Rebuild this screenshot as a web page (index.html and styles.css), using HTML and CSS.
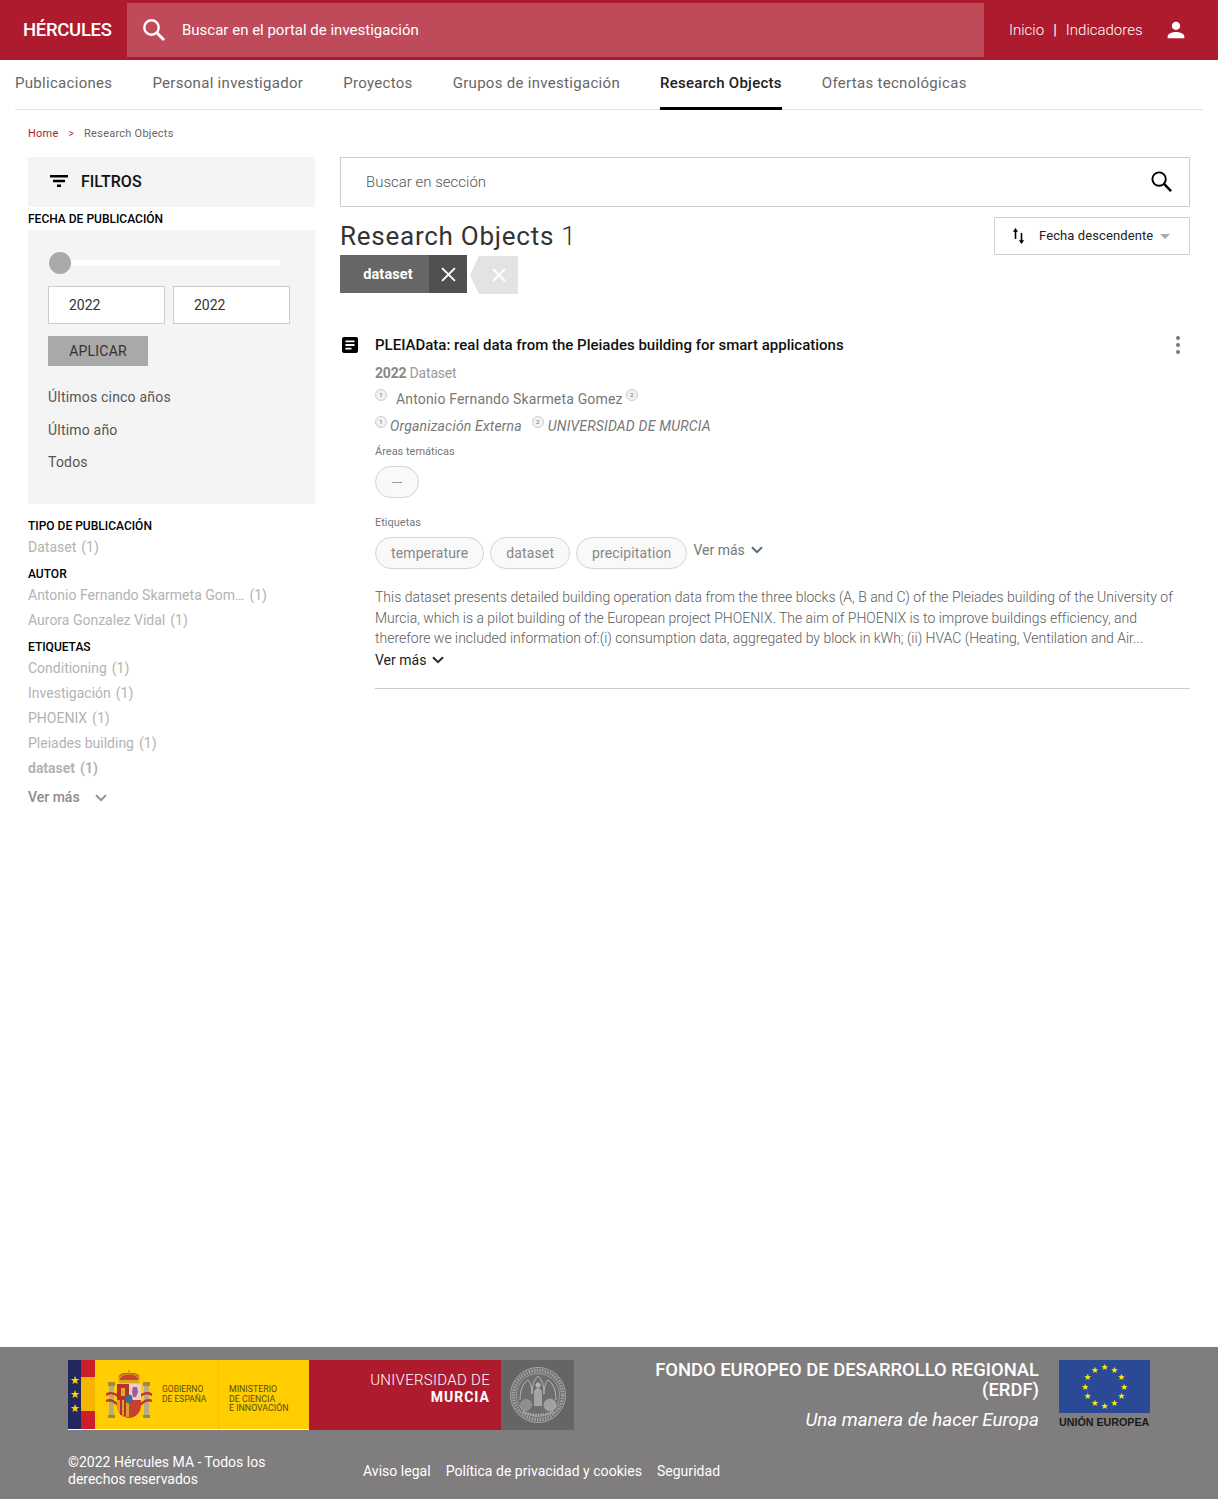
FILE: index.html
```html
<!DOCTYPE html>
<html lang="es">
<head>
  <meta charset="UTF-8">
  <title>Research Objects - Hércules</title>
  <meta name="viewport" content="width=device-width, initial-scale=1.0">
  <link rel="stylesheet" href="styles.css">
</head>
<body>
  <!-- cabecera -->
  <header class="topbar">
    <a class="brand">HÉRCULES</a>
    <div class="portal-search">
      <svg class="portal-search-icon" viewBox="0 0 24 24"><circle cx="9.5" cy="9.5" r="7.2" fill="none" stroke="#fff" stroke-width="2.4"/><path d="M14.8 14.8 22 22" stroke="#fff" stroke-width="3" fill="none"/></svg>
      <span>Buscar en el portal de investigación</span>
    </div>
    <nav class="toplinks">
      <a>Inicio</a><span class="sep">|</span><a>Indicadores</a>
    </nav>
    <svg class="user-icon" viewBox="0 0 24 24"><path fill="#fff" d="M12 12c2.8 0 5-2.2 5-5s-2.2-5-5-5-5 2.2-5 5 2.2 5 5 5zm0 2.5c-3.3 0-10 1.7-10 5V22h20v-2.5c0-3.3-6.7-5-10-5z"/></svg>
  </header>

  <nav class="tabs">
    <a class="tab">Publicaciones</a>
    <a class="tab">Personal investigador</a>
    <a class="tab">Proyectos</a>
    <a class="tab">Grupos de investigación</a>
    <a class="tab active">Research Objects</a>
    <a class="tab">Ofertas tecnológicas</a>
  </nav>

  <div class="breadcrumb"><a>Home</a><span class="bc-sep">&gt;</span><span>Research Objects</span></div>

  <main class="layout">
    <!-- filtros -->
    <aside class="sidebar">
      <div class="filters-head">
        <svg class="filters-icon" viewBox="0 0 18 12"><path d="M0 0h18v2.4H0zM3 4.8h12v2.4H3zM7 9.6h4V12H7z" fill="#000"/></svg>
        <span>FILTROS</span>
      </div>
      <h3 class="filter-title first">FECHA DE PUBLICACIÓN</h3>
      <div class="date-box">
        <div class="slider"><span class="slider-knob"></span></div>
        <div class="year-row">
          <div class="year-input">2022</div>
          <div class="year-input">2022</div>
        </div>
        <button class="apply-btn">APLICAR</button>
        <ul class="date-links">
          <li>Últimos cinco años</li>
          <li>Último año</li>
          <li>Todos</li>
        </ul>
      </div>

      <h3 class="filter-title type">TIPO DE PUBLICACIÓN</h3>
      <ul class="facet">
        <li>Dataset<span class="count">(1)</span></li>
      </ul>
      <h3 class="filter-title">AUTOR</h3>
      <ul class="facet">
        <li>Antonio Fernando Skarmeta Gom…<span class="count">(1)</span></li>
        <li>Aurora Gonzalez Vidal<span class="count">(1)</span></li>
      </ul>
      <h3 class="filter-title">ETIQUETAS</h3>
      <ul class="facet">
        <li>Conditioning<span class="count">(1)</span></li>
        <li>Investigación<span class="count">(1)</span></li>
        <li>PHOENIX<span class="count">(1)</span></li>
        <li>Pleiades building<span class="count">(1)</span></li>
        <li class="selected">dataset<span class="count">(1)</span></li>
      </ul>
      <a class="facet-more">Ver más
        <svg class="chev" viewBox="0 0 12 8"><path d="M1 1.2 6 6.2l5-5" fill="none" stroke="#8c8c8c" stroke-width="1.8"/></svg>
      </a>
    </aside>

    <!-- resultados -->
    <section class="content">
      <div class="section-search">
        <span>Buscar en sección</span>
        <svg class="section-search-icon" viewBox="0 0 24 24"><circle cx="9.5" cy="9.5" r="7" fill="none" stroke="#000" stroke-width="2"/><path d="M14.6 14.6 22 22" stroke="#000" stroke-width="2.6" fill="none"/></svg>
      </div>

      <div class="title-row">
        <div>
          <h1 class="page-title">Research Objects <span class="num">1</span></h1>
          <div class="active-filters">
            <div class="tag-active"><span class="tag-label">dataset</span><span class="tag-close"><svg viewBox="0 0 14 14"><path d="M1 1l12 12M13 1 1 13" stroke="#fff" stroke-width="1.8"/></svg></span></div>
            <div class="tag-clear"><svg viewBox="0 0 14 14"><path d="M1 1l12 12M13 1 1 13" stroke="#fff" stroke-width="2.2"/></svg></div>
          </div>
        </div>
        <div class="sort-box">
          <svg class="sort-icon" viewBox="0 0 12 16"><path d="M3 0 .4 3.8h1.8V11h1.6V3.8h1.8zM9 16l2.6-3.8H9.8V5H8.2v7.2H6.4z" fill="#000"/></svg>
          <span>Fecha descendente</span>
          <span class="caret"></span>
        </div>
      </div>

      <article class="result">
        <svg class="doc-icon" viewBox="0 0 16 16"><path fill-rule="evenodd" d="M2 0h12a2 2 0 0 1 2 2v12a2 2 0 0 1-2 2H2a2 2 0 0 1-2-2V2a2 2 0 0 1 2-2zm1.5 3.5v1.8h9V3.5zm0 3.6v1.8h9V7.1zm0 3.6v1.8h6v-1.8z" fill="#000"/></svg>
        <div class="result-body">
          <div class="result-head">
            <h2 class="result-title">PLEIAData: real data from the Pleiades building for smart applications</h2>
            <span class="dots"><i></i><i></i><i></i></span>
          </div>
          <p class="result-meta"><strong>2022</strong> Dataset</p>
          <p class="result-authors"><span class="badge">1</span><span class="author">Antonio Fernando Skarmeta Gomez</span><span class="badge tight">2</span></p>
          <p class="result-orgs"><span class="badge">1</span><em>Organización Externa</em><span class="badge gap">2</span><em>UNIVERSIDAD DE MURCIA</em></p>
          <div class="group-label">Áreas temáticas</div>
          <div class="pills"><span class="pill small">---</span></div>
          <div class="group-label second">Etiquetas</div>
          <div class="pills">
            <span class="pill">temperature</span>
            <span class="pill">dataset</span>
            <span class="pill">precipitation</span>
            <a class="more-inline">Ver más <svg class="chev" viewBox="0 0 12 8"><path d="M1 1.2 6 6.2l5-5" fill="none" stroke="#5a6c7c" stroke-width="2"/></svg></a>
          </div>
          <p class="abstract">This dataset presents detailed building operation data from the three blocks (A, B and C) of the Pleiades building of the University of Murcia, which is a pilot building of the European project PHOENIX. The aim of PHOENIX is to improve buildings efficiency, and therefore we included information of:(i) consumption data, aggregated by block in kWh; (ii) HVAC (Heating, Ventilation and Air...</p>
          <a class="more-abstract">Ver más <svg class="chev" viewBox="0 0 12 8"><path d="M1 1.2 6 6.2l5-5" fill="none" stroke="#1f2d3a" stroke-width="2"/></svg></a>
        </div>
      </article>
    </section>
  </main>

  <!-- pie -->
  <footer class="footer">
    <div class="footer-top">
      <div class="logos">
        <div class="logo-flag">
          <div class="flag-eu"><span>★</span><span>★</span><span>★</span></div>
          <div class="flag-es"></div>
        </div>
        <div class="logo-gov">
          <svg class="coat" viewBox="0 0 46 50">
            <!-- columnas -->
            <rect x="3" y="15" width="5" height="31" fill="#b5ad86"/>
            <rect x="38" y="15" width="5" height="31" fill="#b5ad86"/>
            <rect x="2" y="12" width="7" height="4" fill="#a8892f"/>
            <rect x="37" y="12" width="7" height="4" fill="#a8892f"/>
            <rect x="2" y="45" width="7" height="3" fill="#8d8a55"/>
            <rect x="37" y="45" width="7" height="3" fill="#8d8a55"/>
            <path d="M0 25c4-3 9-2 13 2M0 31c4-2 8 0 12 4M46 25c-4-3-9-2-13 2M46 31c-4-2-8 0-12 4" stroke="#c2342c" stroke-width="2.4" fill="none"/>
            <!-- corona -->
            <path d="M13 10C11 3 18 3 23 3s12 0 10 7z" fill="#c8442d"/>
            <path d="M13 10c0-4 5-6 10-6s10 2 10 6" fill="none" stroke="#d9a520" stroke-width="1.2"/>
            <rect x="22.3" y="0" width="1.4" height="5" fill="#b8912a"/>
            <rect x="13" y="10" width="20" height="3" fill="#d9a520"/>
            <!-- escudo -->
            <path d="M11 14h24v21c0 8-6 13-12 13s-12-5-12-13z" fill="#c9402e"/>
            <rect x="11" y="14" width="12" height="16" fill="#b8322a"/>
            <rect x="15" y="18" width="4" height="8" fill="#e0a92c"/>
            <rect x="23" y="14" width="12" height="16" fill="#ecd0c4"/>
            <path d="M27 17h4l1 5-2 5h-3l-1-5z" fill="#a05a9c"/>
            <path d="M11 30h12v17c-7 0-12-5-12-12z" fill="#dba02a"/>
            <rect x="14" y="30" width="2" height="15" fill="#b8322a"/>
            <rect x="18" y="30" width="2" height="16" fill="#b8322a"/>
            <ellipse cx="23" cy="29" rx="3.5" ry="4.5" fill="#3f6a8f"/>
          </svg>
          <div class="gov-text">GOBIERNO<br>DE ESPAÑA</div>
        </div>
        <div class="logo-min">MINISTERIO<br>DE CIENCIA<br>E INNOVACIÓN</div>
        <div class="logo-um">
          <div class="um-text">UNIVERSIDAD DE<br><b>MURCIA</b></div>
        </div>
        <div class="logo-seal">
          <svg viewBox="0 0 58 58">
            <circle cx="29" cy="29" r="27.5" fill="#6f6e6e" stroke="#a9a8a8" stroke-width="1"/>
            <circle cx="29" cy="29" r="24.5" fill="none" stroke="#a3a2a2" stroke-width="3.5" stroke-dasharray="1.5 1.2"/>
            <circle cx="29" cy="29" r="21.5" fill="none" stroke="#a9a8a8" stroke-width="0.8"/>
            <path d="M11 34c0-10 3-17 8-20 3 3 4 8 4 14M23 28c0-9 2-14 6-18 4 4 6 9 6 18M35 28c0-6 1-11 4-14 5 3 8 10 8 20" fill="none" stroke="#b5b4b4" stroke-width="1"/>
            <path d="M25 40V25l4-4 4 4v15z" fill="#a5a4a4"/>
            <circle cx="29" cy="19" r="2.5" fill="#b5b4b4"/>
            <circle cx="41" cy="39" r="6" fill="#a2a1a1" stroke="#c0bfbf" stroke-width="0.8" stroke-dasharray="1 1"/>
            <circle cx="17" cy="39" r="5.5" fill="#8f8e8e" stroke="#b5b4b4" stroke-width="0.8" stroke-dasharray="1 1"/>
            <path d="M14 46c9 4 21 4 30 0" fill="none" stroke="#b0afaf" stroke-width="2.5" stroke-dasharray="1.5 1"/>
          </svg>
        </div>
      </div>
      <div class="erdf">
        <div class="erdf-text">
          <div class="erdf-title">FONDO EUROPEO DE DESARROLLO REGIONAL<br>(ERDF)</div>
          <div class="erdf-motto">Una manera de hacer Europa</div>
        </div>
        <div class="eu-logo">
          <svg class="eu-flag" viewBox="0 0 91 53">
            <rect width="91" height="53" fill="#2a4a96"/>
            <g fill="#ffed00" font-size="8.5" text-anchor="middle" font-family="DejaVu Sans, sans-serif">
              <text x="45.5" y="10">★</text><text x="55.2" y="12.6">★</text><text x="62.4" y="19.8">★</text><text x="65" y="29.5">★</text><text x="62.4" y="39.2">★</text><text x="55.2" y="46.4">★</text><text x="45.5" y="49">★</text><text x="35.8" y="46.4">★</text><text x="28.6" y="39.2">★</text><text x="26" y="29.5">★</text><text x="28.6" y="19.8">★</text><text x="35.8" y="12.6">★</text>
            </g>
          </svg>
          <div class="eu-name">UNIÓN EUROPEA</div>
        </div>
      </div>
    </div>
    <div class="footer-bottom">
      <div class="copyright">©2022 Hércules MA - Todos los derechos reservados</div>
      <nav class="legal">
        <a>Aviso legal</a>
        <a>Política de privacidad y cookies</a>
        <a>Seguridad</a>
      </nav>
    </div>
  </footer>
</body>
</html>
```

FILE: styles.css
```css
* { box-sizing: border-box; margin: 0; padding: 0; }
body {
  font-family: Roboto, 'Liberation Sans', sans-serif;
  min-height: 100vh;
  display: flex;
  flex-direction: column;
  background: #fff;
  color: #333;
}
ul { list-style: none; }

/* cabecera */
.topbar {
  height: 60px;
  background: #ae1b2e;
  padding: 3px 0;
  display: flex;
  align-items: center;
  color: #fff;
}
.brand {
  width: 127px;
  padding: 0 0 1px 23px;
  font-size: 18.5px;
  font-weight: 500;
  letter-spacing: -0.3px;
}
.portal-search {
  width: 857px;
  height: 54px;
  background: #bf4a5a;
  display: flex;
  align-items: center;
  padding-left: 15px;
  font-size: 15px;
}
.portal-search-icon { width: 24px; height: 24px; margin-right: 16px; }
.toplinks {
  margin-left: 25px;
  font-size: 15px;
  font-weight: 300;
  display: flex;
  align-items: center;
}
.toplinks .sep { margin: 0 9px; font-weight: 400; }
.user-icon { width: 20px; height: 20px; margin-left: 23px; }

.tabs {
  height: 50px;
  margin: 0 15px;
  border-bottom: 1px solid #e0e0e0;
  display: flex;
  gap: 40px;
}
.tab {
  font-size: 15px;
  line-height: 46px;
  letter-spacing: 0.3px;
  color: #666;
  height: 50px;
}
.tab.active {
  color: #222;
  font-weight: 500;
  letter-spacing: 0.27px;
  border-bottom: 3px solid #000;
}

.breadcrumb {
  margin: 17px 28px 0;
  height: 14px;
  font-size: 11px;
  line-height: 14px;
  letter-spacing: 0.25px;
  color: #666;
  display: flex;
}
.breadcrumb a { color: #ae1b2e; }
.bc-sep { margin: 0 10px; color: #ae1b2e; font-size: 10px; }

.layout {
  display: flex;
  gap: 25px;
  padding: 16px 28px 0;
}

/* filtros */
.sidebar { width: 287px; flex-shrink: 0; }
.filters-head {
  height: 50px;
  background: #f4f4f4;
  display: flex;
  align-items: center;
  padding: 0 0 2px 22px;
  font-size: 16px;
  font-weight: 500;
  color: #111;
}
.filters-icon { width: 18px; height: 12px; margin-right: 13px; }
.filter-title {
  font-size: 12px;
  line-height: 16px;
  font-weight: 500;
  color: #000;
  margin-top: 6px;
}
.filter-title.first { margin-top: 4px; }
.filter-title.type { margin-top: 14px; }
.date-box {
  margin-top: 3px;
  height: 274px;
  background: #f4f4f4;
  padding: 30px 20px 0;
}
.slider {
  position: relative;
  height: 6px;
  width: 233px;
  background: #fff;
  border-radius: 3px;
}
.slider-knob {
  position: absolute;
  left: 1px;
  top: -8px;
  width: 22px;
  height: 22px;
  border-radius: 50%;
  background: #a9a9a9;
}
.year-row { display: flex; gap: 8px; margin-top: 20px; }
.year-input {
  width: 117px;
  height: 38px;
  background: #fff;
  border: 1px solid #ccc;
  padding-left: 20px;
  font-size: 14px;
  line-height: 36px;
  color: #333;
}
.apply-btn {
  display: block;
  width: 100px;
  height: 30px;
  margin-top: 12px;
  border: none;
  background: #a9a9a9;
  font-family: inherit;
  font-size: 14px;
  letter-spacing: 0.2px;
  color: #333;
}
.date-links { margin-top: 15px; font-size: 14px; letter-spacing: 0.2px; color: #555; }
.date-links li { line-height: 32.5px; }
.facet { font-size: 14px; color: #b3b3b3; margin-top: 1px; }
.facet li { line-height: 25px; }
.facet li.selected { font-weight: 700; }
.count { margin-left: 5px; }
.facet-more {
  display: flex;
  align-items: center;
  margin-top: 4px;
  font-size: 14px;
  line-height: 25px;
  font-weight: 500;
  color: #8c8c8c;
}
.facet-more .chev { margin-left: 15px; }
.chev { width: 12px; height: 8px; }

/* resultados */
.content { flex: 1; }
.section-search {
  height: 50px;
  border: 1px solid #ccc;
  display: flex;
  align-items: center;
  justify-content: space-between;
  padding: 0 16px 0 25px;
  font-size: 15px;
  font-weight: 300;
  color: #555;
}
.section-search-icon { width: 23px; height: 23px; margin-top: -2px; }
.title-row {
  display: flex;
  justify-content: space-between;
  align-items: flex-start;
  margin-top: 10px;
}
.page-title {
  font-size: 26px;
  line-height: 38px;
  font-weight: 400;
  letter-spacing: 0.75px;
  color: #333;
}
.page-title .num { font-weight: 300; }
.active-filters { display: flex; margin-top: 0; }
.tag-active { display: flex; height: 38px; background: #666; color: #fff; }
.tag-label {
  width: 89px;
  text-align: center;
  font-size: 14.5px;
  letter-spacing: 0.1px;
  font-weight: 700;
  line-height: 39px;
  padding-left: 7px;
}
.tag-close {
  width: 38px;
  background: #505050;
  display: flex;
  align-items: center;
  justify-content: center;
}
.tag-close svg { width: 15px; height: 15px; }
.tag-clear {
  width: 48px;
  height: 38px;
  margin: 1px 0 0 3px;
  background: #e3e3e3;
  clip-path: polygon(0 50%, 9px 0, 100% 0, 100% 100%, 9px 100%);
  display: flex;
  align-items: center;
  justify-content: center;
  padding-left: 10px;
}
.tag-clear svg { width: 14px; height: 14px; }
.sort-box {
  width: 196px;
  height: 38px;
  border: 1px solid #d0d0d0;
  display: flex;
  align-items: center;
  padding: 0 0 2px 17px;
  font-size: 13px;
  letter-spacing: 0.1px;
  color: #222;
}
.sort-icon { width: 13px; height: 16px; margin-right: 14px; margin-top: 2px; }
.caret {
  margin-left: 7px;
  margin-top: 3px;
  border: 5px solid transparent;
  border-top: 5px solid #aaa;
  border-bottom: 0;
}

.result { display: flex; margin-top: 41px; }
.doc-icon { width: 16px; height: 16px; margin: 2px 0 0 2px; flex-shrink: 0; }
.result-body {
  flex: 1;
  margin-left: 17px;
  border-bottom: 1px solid #ccc;
  padding-bottom: 18px;
}
.result-head { display: flex; justify-content: space-between; }
.result-title {
  font-size: 15px;
  line-height: 20px;
  font-weight: 500;
  color: #111;
}
.dots { display: flex; flex-direction: column; gap: 3px; padding: 1px 10px 0 0; }
.dots i { width: 4px; height: 4px; border-radius: 50%; background: #777; }
.result-meta {
  margin-top: 8px;
  font-size: 14px;
  line-height: 20px;
  letter-spacing: -0.2px;
  color: #999;
}
.result-meta strong { color: #888; font-weight: 700; }
.result-authors, .result-orgs {
  font-size: 14px;
  line-height: 20px;
  letter-spacing: 0.17px;
  color: #777;
  display: flex;
  align-items: flex-end;
}
.result-authors { margin-top: 6px; }
.result-orgs { margin-top: 7px; }
.badge {
  width: 12px;
  height: 12px;
  border-radius: 50%;
  background: #f2f2f2;
  border: 1px solid #ccc;
  font-size: 6px;
  line-height: 10px;
  text-align: center;
  color: #666;
  align-self: flex-start;
  flex-shrink: 0;
}
.author { margin-left: 9px; }
.badge.tight { margin-left: 3px; }
.badge.gap { margin: 0 4px 0 10px; }
.result-orgs .badge:first-child { margin-right: 3px; }
.group-label {
  margin-top: 9px;
  font-size: 11px;
  line-height: 14px;
  color: #777;
}
.group-label.second { margin-top: 18px; }
.pills { display: flex; gap: 6px; margin-top: 7px; align-items: flex-start; }
.pill {
  height: 32px;
  padding: 0 15px;
  border: 1px solid #d5d5d5;
  border-radius: 16px;
  background: #f9f9f9;
  font-size: 14px;
  line-height: 30px;
  letter-spacing: 0.12px;
  color: #888;
}
.pill.small { font-size: 12px; width: 44px; padding: 0; text-align: center; }
.more-inline {
  font-size: 14px;
  line-height: 24px;
  margin-top: 1px;
  color: #777;
  white-space: nowrap;
  display: flex;
  align-items: center;
  gap: 6px;
}
.abstract {
  margin-top: 18px;
  font-size: 14px;
  line-height: 20.5px;
  font-weight: 300;
  letter-spacing: -0.015px;
  color: #5c5c5c;
}
.more-abstract {
  display: flex;
  align-items: center;
  gap: 6px;
  font-size: 14px;
  line-height: 20px;
  color: #222;
  margin-top: 1px;
}

/* pie */
.footer {
  margin-top: auto;
  height: 152px;
  background: #807d7e;
  padding: 13px 68px 0;
  color: #fff;
}
.footer-top { display: flex; justify-content: space-between; }
.logos { display: flex; height: 70px; width: 506px; }
.logo-flag { display: flex; width: 27px; border-bottom: 1px solid #fff; }
.flag-eu {
  width: 13px;
  background: #22285f;
  color: #ffd100;
  font-size: 11px;
  line-height: 14px;
  display: flex;
  flex-direction: column;
  justify-content: center;
  align-items: center;
}
.flag-es { width: 14px; background: linear-gradient(#cc1f2a 0 24%, #f7b500 24% 74%, #cc1f2a 74%); }
.logo-gov {
  width: 123px;
  background: #ffcd00;
  border-bottom: 1px solid #fff;
  display: flex;
  align-items: center;
  padding-left: 11px;
}
.coat { width: 46px; height: 50px; flex-shrink: 0; }
.gov-text {
  margin-left: 10px;
  font-size: 8.5px;
  line-height: 9.5px;
  color: #5c4b14;
  white-space: nowrap;
}
.logo-min {
  width: 91px;
  background: #ffcd00;
  border-bottom: 1px solid #fff;
  border-left: 1px solid #f5c400;
  padding: 25px 0 0 10px;
  font-size: 8.8px;
  line-height: 9.5px;
  color: #5c4b14;
  white-space: nowrap;
}
.logo-um {
  width: 192px;
  background: #ae1b2e;
  padding: 12px 11px 0 0;
  text-align: right;
}
.um-text { font-size: 15px; line-height: 17px; font-weight: 300; letter-spacing: 0.3px; }
.um-text b { font-weight: 700; letter-spacing: 1px; font-size: 14px; }
.logo-seal {
  width: 73px;
  background: #666566;
  display: flex;
  align-items: center;
  justify-content: center;
}
.logo-seal svg { width: 58px; height: 58px; }
.erdf { display: flex; gap: 20px; }
.erdf-text { text-align: right; }
.erdf-title { font-size: 18.4px; line-height: 20px; font-weight: 500; white-space: nowrap; }
.erdf-motto { margin-top: 10px; font-size: 18.8px; line-height: 21px; font-style: italic; }
.eu-logo { width: 91px; }
.eu-flag { display: block; width: 91px; height: 53px; }
.eu-name {
  margin-top: 3px;
  font-family: 'Liberation Sans', sans-serif;
  font-size: 10.7px;
  line-height: 12px;
  font-weight: 700;
  color: #1a1a1a;
  white-space: nowrap;
}
.footer-bottom { display: flex; align-items: center; margin-top: 23px; font-size: 14px; line-height: 17px; }
.copyright { width: 210px; }
.legal { display: flex; gap: 15px; margin-left: 85px; letter-spacing: 0.03px; }
```
